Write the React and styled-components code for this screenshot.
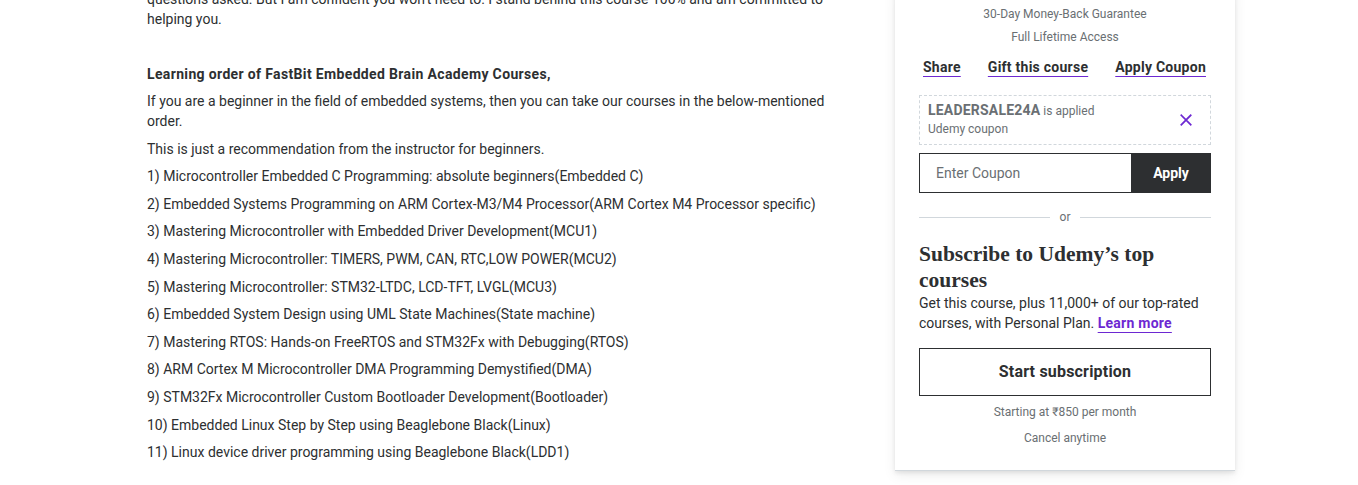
import React from "react";
import styled, { createGlobalStyle } from "styled-components";

const GlobalStyle = createGlobalStyle`
  body {
    margin: 0;
    background: #fff;
    font-family: Roboto, "Liberation Sans", sans-serif;
    color: #2d2f31;
  }
`;

const Page = styled.div`
  display: flex;
  align-items: flex-start;
  gap: 58px;
  padding-left: 147px;
  margin-top: -10px;
  height: 495px;
  overflow: hidden;
`;

const Description = styled.div`
  width: 690px;
  font-size: 14px;
  line-height: 1.4;
  color: #2d2f31;

  p {
    margin: 0 0 8px 0;
    min-height: 19.6px;
  }

  strong {
    font-weight: 700;
    letter-spacing: 0.35px;
  }
`;

const Card = styled.div`
  width: 340px;
  box-sizing: border-box;
  background: #fff;
  padding: 13px 24px 24px;
  box-shadow: 0 2px 4px rgba(0, 0, 0, 0.08), 0 4px 12px rgba(0, 0, 0, 0.08);
  border-bottom: 1px solid #d1d7dc;
`;

const Note = styled.div`
  text-align: center;
  font-size: 12px;
  line-height: 16.8px;
  padding: 3px 0;
  color: #6a6f73;
`;

const Actions = styled.div`
  display: flex;
  justify-content: space-between;
  padding: 0 5px 0 4px;
  margin-top: 9px;
`;

const TextLink = styled.a`
  font-size: 14px;
  font-weight: 700;
  line-height: 19.6px;
  letter-spacing: 0.25px;
  color: ${(p) => (p.$purple ? "#6d28d2" : "#2d2f31")};
  text-decoration: underline;
  text-decoration-color: #6d28d2;
  text-underline-offset: 4px;
  text-decoration-thickness: 1px;
  cursor: pointer;
`;

const CouponBox = styled.div`
  display: flex;
  align-items: center;
  justify-content: space-between;
  margin-top: 18px;
  padding: 5px 16px 5px 8px;
  border: 1px dashed #d1d7dc;
  color: #6a6f73;
`;

const CouponCode = styled.div`
  font-size: 12px;
  line-height: 18px;

  b {
    font-size: 14px;
    font-weight: 700;
    letter-spacing: 0.2px;
  }
`;

const CouponSub = styled.div`
  font-size: 12px;
  line-height: 19px;
`;

const CloseButton = styled.button`
  border: 0;
  background: none;
  padding: 0;
  display: flex;
  cursor: pointer;
`;

const CouponForm = styled.div`
  display: flex;
  margin-top: 8px;
  height: 40px;
`;

const CouponInput = styled.input`
  flex: 1;
  min-width: 0;
  box-sizing: border-box;
  border: 1px solid #2d2f31;
  border-right: 0;
  padding: 0 16px;
  font-family: inherit;
  font-size: 14px;
  color: #2d2f31;
  outline: none;

  &::placeholder {
    color: #6a6f73;
  }
`;

const ApplyButton = styled.button`
  width: 80px;
  border: 0;
  background: #2d2f31;
  color: #fff;
  font-family: inherit;
  font-size: 14px;
  font-weight: 700;
  cursor: pointer;
`;

const Divider = styled.div`
  display: flex;
  align-items: center;
  gap: 10px;
  margin-top: 16px;
  font-size: 12px;
  line-height: 17px;
  color: #6a6f73;

  &::before,
  &::after {
    content: "";
    flex: 1;
    height: 1px;
    background: #d1d7dc;
  }
`;

const Heading = styled.h3`
  margin: 15px 0 0;
  font-family: "Liberation Serif", "DejaVu Serif", serif;
  font-size: 21.5px;
  font-weight: 700;
  line-height: 26px;
  color: #2d2f31;
`;

const Blurb = styled.p`
  margin: 0;
  font-size: 14px;
  line-height: 20px;
  color: #2d2f31;
`;

const OutlineButton = styled.button`
  display: block;
  width: 100%;
  height: 48px;
  margin-top: 14px;
  border: 1px solid #2d2f31;
  background: #fff;
  color: #2d2f31;
  font-family: inherit;
  font-size: 16px;
  font-weight: 700;
  letter-spacing: 0.2px;
  cursor: pointer;
`;

const SmallNote = styled(Note)`
  padding: 0;
  margin-top: ${(p) => p.$top || 0}px;
`;

const courses = [
  "1) Microcontroller Embedded C Programming: absolute beginners(Embedded C)",
  "2) Embedded Systems Programming on ARM Cortex-M3/M4 Processor(ARM Cortex M4 Processor specific)",
  "3) Mastering Microcontroller with Embedded Driver Development(MCU1)",
  "4) Mastering Microcontroller: TIMERS, PWM, CAN, RTC,LOW POWER(MCU2)",
  "5) Mastering Microcontroller: STM32-LTDC, LCD-TFT, LVGL(MCU3)",
  "6) Embedded System Design using UML State Machines(State machine)",
  "7) Mastering RTOS: Hands-on FreeRTOS and STM32Fx with Debugging(RTOS)",
  "8) ARM Cortex M Microcontroller DMA Programming Demystified(DMA)",
  "9) STM32Fx Microcontroller Custom Bootloader Development(Bootloader)",
  "10) Embedded Linux Step by Step using Beaglebone Black(Linux)",
  "11) Linux device driver programming using Beaglebone Black(LDD1)",
];

function App() {
  return (
    <>
      <GlobalStyle />
      <Page>
        <Description>
          <p>
            questions asked. But I am confident you won't need to. I stand behind this course
            100% and am committed to helping you.
          </p>
          <p></p>
          <p>
            <strong>Learning order of FastBit Embedded Brain Academy Courses,</strong>
          </p>
          <p>
            If you are a beginner in the field of embedded systems, then you can take our courses
            in the below-mentioned order.
          </p>
          <p>This is just a recommendation from the instructor for beginners.</p>
          {courses.map((c) => (
            <p key={c}>{c}</p>
          ))}
        </Description>

        <Card>
          <Note>30-Day Money-Back Guarantee</Note>
          <Note>Full Lifetime Access</Note>
          <Actions>
            <TextLink>Share</TextLink>
            <TextLink>Gift this course</TextLink>
            <TextLink>Apply Coupon</TextLink>
          </Actions>
          <CouponBox>
            <div>
              <CouponCode>
                <b>LEADERSALE24A</b> is applied
              </CouponCode>
              <CouponSub>Udemy coupon</CouponSub>
            </div>
            <CloseButton aria-label="Remove coupon">
              <svg width="16" height="16" viewBox="0 0 24 24" fill="none" stroke="#6d28d2" strokeWidth="2.6" strokeLinecap="square">
                <path d="M5 5 19 19M19 5 5 19" />
              </svg>
            </CloseButton>
          </CouponBox>
          <CouponForm>
            <CouponInput placeholder="Enter Coupon" />
            <ApplyButton>Apply</ApplyButton>
          </CouponForm>
          <Divider>or</Divider>
          <Heading>Subscribe to Udemy’s top courses</Heading>
          <Blurb>
            Get this course, plus 11,000+ of our top-rated courses, with Personal Plan.{" "}
            <TextLink $purple>Learn more</TextLink>
          </Blurb>
          <OutlineButton>Start subscription</OutlineButton>
          <SmallNote $top={8}>Starting at ₹850 per month</SmallNote>
          <SmallNote $top={9}>Cancel anytime</SmallNote>
        </Card>
      </Page>
    </>
  );
}

export default App;
